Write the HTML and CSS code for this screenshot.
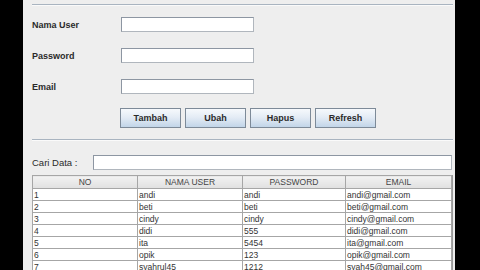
FILE: index.html
```html
<!DOCTYPE html>
<html>
<head>
<meta charset="utf-8">
<link rel="stylesheet" href="styles.css">
</head>
<body>
<div class="panel">
  <div class="rule rule-top"></div>
  <div class="form">
    <div class="row"><span class="label">Nama User</span><input class="field" type="text"></div>
    <div class="row"><span class="label">Password</span><input class="field" type="text"></div>
    <div class="row"><span class="label">Email</span><input class="field" type="text"></div>
  </div>
  <div class="buttons">
    <button class="btn">Tambah</button>
    <button class="btn">Ubah</button>
    <button class="btn">Hapus</button>
    <button class="btn">Refresh</button>
  </div>
  <div class="rule rule-mid"></div>
  <div class="search">
    <span class="label search-label">Cari Data :</span>
    <input class="field search-field" type="text">
  </div>
  <div class="table-wrap">
    <table class="grid">
      <colgroup><col class="c1"><col class="c2"><col class="c3"><col class="c4"></colgroup>
      <thead>
        <tr><th>NO</th><th>NAMA USER</th><th>PASSWORD</th><th>EMAIL</th></tr>
      </thead>
      <tbody>
        <tr><td>1</td><td>andi</td><td>andi</td><td>andi@gmail.com</td></tr>
        <tr><td>2</td><td>beti</td><td>beti</td><td>beti@gmail.com</td></tr>
        <tr><td>3</td><td>cindy</td><td>cindy</td><td>cindy@gmail.com</td></tr>
        <tr><td>4</td><td>didi</td><td>555</td><td>didi@gmail.com</td></tr>
        <tr><td>5</td><td>ita</td><td>5454</td><td>ita@gmail.com</td></tr>
        <tr><td>6</td><td>opik</td><td>123</td><td>opik@gmail.com</td></tr>
        <tr><td>7</td><td>syahrul45</td><td>1212</td><td>syah45@gmail.com</td></tr>
      </tbody>
    </table>
  </div>
</div>
</body>
</html>
```
FILE: styles.css
```css
html, body {
  margin: 0;
  padding: 0;
  background: #000;
  height: 270px;
  overflow: hidden;
}
body {
  display: flex;
}
.panel {
  margin-left: 23px;
  width: 432px;
  height: 270px;
  background: #eeeeee;
  padding-left: 9px;
  box-sizing: border-box;
  display: flex;
  flex-direction: column;
  font-family: "Liberation Sans", Arial, sans-serif;
  color: #222;
}
.rule {
  flex: none;
  width: 421px;
  height: 1px;
  background: #a9b4c0;
  border-bottom: 1px solid #fafafa;
}
.rule-top { margin-top: 4px; }
.form {
  margin-top: 11px;
  display: flex;
  flex-direction: column;
  gap: 16px;
}
.row {
  display: flex;
  align-items: center;
  height: 15px;
}
.label {
  font-size: 9px;
  font-weight: bold;
  color: #2a2a2a;
  width: 89px;
  flex: none;
}
.field {
  width: 133px;
  height: 15px;
  box-sizing: border-box;
  margin: 0;
  padding: 0;
  border: 1px solid #8d96a2;
  border-right-color: #b0b6bd;
  border-bottom-color: #b0b6bd;
  background: #fff;
  outline: none;
}
.buttons {
  margin-top: 14px;
  margin-left: 88px;
  display: flex;
  gap: 4px;
}
.btn {
  width: 61px;
  height: 20px;
  margin: 0;
  padding: 0;
  box-sizing: border-box;
  border: 1px solid #7d8a98;
  background: linear-gradient(#f6f9fc 0%, #e4ecf5 45%, #c2d5e8 100%);
  font-family: "Liberation Sans", Arial, sans-serif;
  font-size: 9px;
  font-weight: bold;
  color: #2a2a2a;
}
.rule-mid { margin-top: 11px; }
.search {
  margin-top: 14px;
  display: flex;
  align-items: center;
  height: 15px;
}
.search-label {
  width: 61px;
  font-weight: normal;
  font-size: 9.5px;
}
.search-field {
  width: 359px;
}
.table-wrap {
  margin-top: 5px;
  width: 421px;
  border-right: 2px solid #9a9a9a;
  box-sizing: border-box;
}
.grid {
  border-collapse: collapse;
  table-layout: fixed;
  width: 419px;
  font-size: 8.5px;
  color: #333;
  background: #fff;
}
.c1 { width: 105px; }
.c2 { width: 105px; }
.c3 { width: 103px; }
.c4 { width: 106px; }
.grid th {
  height: 12px;
  padding: 0;
  font-weight: normal;
  background: linear-gradient(#f2f2f2, #e0e0e0);
  border: 1px solid #a6a6a6;
  text-align: center;
  color: #444;
}
.grid td {
  height: 11px;
  padding: 0 0 0 1px;
  border: 1px solid #a6a6a6;
  line-height: 10px;
  white-space: nowrap;
  overflow: hidden;
}
```
